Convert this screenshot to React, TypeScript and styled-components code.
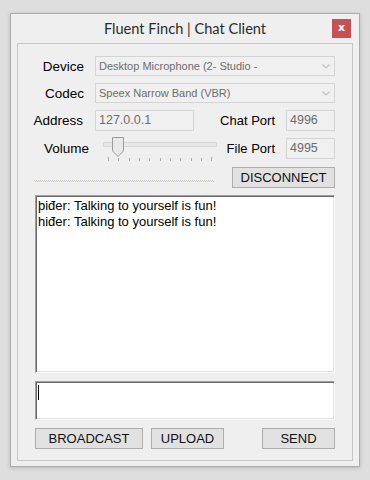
import React from 'react';
import styled, { createGlobalStyle } from 'styled-components';

const GlobalStyle = createGlobalStyle`
  html, body {
    margin: 0;
    padding: 0;
    background: #dedede;
  }
  body {
    font-family: "Liberation Sans", Arial, sans-serif;
    color: #000;
  }
`;

const Page = styled.div`
  padding: 13px 10px 0;
  height: 480px;
  box-sizing: border-box;
`;

const Window = styled.div`
  width: 350px;
  height: 454px;
  box-sizing: border-box;
  border: 1px solid #ababab;
  background: #efefef;
  box-shadow: 0 1px 4px rgba(0, 0, 0, 0.18);
  padding: 0 6px 5px;
  display: flex;
  flex-direction: column;
`;

const TitleBar = styled.div`
  height: 29px;
  flex: none;
  display: grid;
  grid-template-columns: 1fr auto 1fr;
  align-items: center;
`;

const Title = styled.div`
  grid-column: 2;
  font-family: Lato, "Noto Sans", sans-serif;
  font-size: 14.6px;
  color: #2b2b2b;
  white-space: nowrap;
`;

const CloseButton = styled.div`
  grid-column: 3;
  justify-self: end;
  align-self: start;
  margin-top: 5px;
  margin-right: 2px;
  width: 19px;
  height: 19px;
  background: #c75050;
  color: #fff;
  font-family: "DejaVu Sans", sans-serif;
  font-weight: bold;
  font-size: 11px;
  line-height: 17px;
  text-align: center;
`;

const Panel = styled.div`
  flex: 1;
  border: 1px solid #c6c6c6;
  padding: 12px 17px 11px 0;
  display: flex;
  flex-direction: column;
`;

const Row = styled.div<{ $h: number; $mt?: number }>`
  display: flex;
  align-items: center;
  height: ${(p) => p.$h}px;
  margin-top: ${(p) => p.$mt ?? 0}px;
  flex: none;
`;

const Label = styled.span<{ $w: number }>`
  flex: none;
  width: ${(p) => p.$w}px;
  text-align: right;
  font-size: 13.5px;
  white-space: nowrap;
`;

const PortLabel = styled.span`
  margin-left: auto;
  font-size: 13px;
  white-space: nowrap;
`;

const Select = styled.div`
  margin-left: 11px;
  width: 240px;
  height: 20px;
  box-sizing: border-box;
  border: 1px solid #d4d4d4;
  background: #f0f0f0;
  display: flex;
  align-items: center;
  padding: 0 4px 0 3px;
  font-size: 11px;
  color: #6d6d6d;
  white-space: nowrap;
`;

const SelectText = styled.span`
  flex: 1;
`;

const TextBox = styled.div<{ $w: number; $ml: number }>`
  margin-left: ${(p) => p.$ml}px;
  width: ${(p) => p.$w}px;
  height: 21px;
  box-sizing: border-box;
  border: 1px solid #d4d4d4;
  background: #f0f0f0;
  padding-left: 3px;
  font-size: 12.5px;
  line-height: 19px;
  color: #6d6d6d;
`;

const Slider = styled.svg`
  margin-left: 14px;
  flex: none;
  overflow: visible;
`;

const Dots = styled.div`
  margin-left: 16px;
  align-self: flex-end;
  margin-bottom: 6px;
  width: 180px;
  height: 2px;
  background:
    repeating-linear-gradient(90deg, #dcc8a4 0 1px, #f0f0f0 1px 2px, #b7c6dc 2px 3px, #f0f0f0 3px 4px) top / 100% 1px no-repeat,
    repeating-linear-gradient(90deg, #f0f0f0 0 1px, #c3cfdf 1px 2px, #f0f0f0 2px 3px, #d9c39c 3px 4px) bottom / 100% 1px no-repeat;
`;

const Button = styled.div<{ $w: number; $ml?: number }>`
  margin-left: ${(p) => p.$ml ?? 0}px;
  width: ${(p) => p.$w}px;
  height: 21px;
  box-sizing: border-box;
  border: 1px solid #adadad;
  background: #e1e1e1;
  font-size: 13px;
  line-height: 19px;
  text-align: center;
  color: #111;
  white-space: nowrap;
`;

const Sunken = styled.div<{ $h: number; $mt: number }>`
  margin-left: 17px;
  margin-top: ${(p) => p.$mt}px;
  width: 300px;
  height: ${(p) => p.$h}px;
  flex: none;
  box-sizing: border-box;
  background: #fff;
  border: 1px solid;
  border-color: #a0a0a0 #ffffff #ffffff #a0a0a0;
  box-shadow: inset 1px 1px 0 #696969, inset -1px -1px 0 #e3e3e3;
  padding: 2px 0 0 2px;
`;

const Message = styled.div`
  font-size: 13px;
  line-height: 16px;
  white-space: nowrap;
`;

const Caret = styled.div`
  margin-top: 1px;
  width: 1px;
  height: 15px;
  background: #000;
`;

const ButtonRow = styled.div`
  display: flex;
  margin-top: 8px;
  margin-left: 17px;
  height: 21px;
  flex: none;
`;

const Spacer = styled.div`
  flex: 1;
`;

function Chevron() {
  return (
    <svg width="8" height="5" viewBox="0 0 8 5">
      <polyline points="0.5,0.5 4,4 7.5,0.5" fill="none" stroke="#c2c2c2" strokeWidth="1.2" />
    </svg>
  );
}

const ticks = [5, 15, 26, 36, 46, 57, 67, 77, 88, 98, 108];

function VolumeSlider() {
  return (
    <Slider width="114" height="25" viewBox="0 0 114 25">
      <rect x="0.5" y="6.5" width="113" height="4" fill="#e7e9e9" stroke="#d5d5d5" />
      {ticks.map((x, i) => (
        <line
          key={x}
          x1={x + 0.5}
          x2={x + 0.5}
          y1={i === 0 || i === ticks.length - 1 ? 21 : 22}
          y2={25}
          stroke="#a8a8a8"
        />
      ))}
      <path d="M9.5 1.5 H20.5 V15 L15 20.5 L9.5 15 Z" fill="#e8e8e8" stroke="#9b9b9b" />
    </Slider>
  );
}

const App: React.FC = () => {
  return (
    <Page>
      <GlobalStyle />
      <Window>
        <TitleBar>
          <Title>Fluent Finch | Chat Client</Title>
          <CloseButton>x</CloseButton>
        </TitleBar>
        <Panel>
          <Row $h={20}>
            <Label $w={66}>Device</Label>
            <Select>
              <SelectText>Desktop Microphone (2- Studio -</SelectText>
              <Chevron />
            </Select>
          </Row>
          <Row $h={20} $mt={7}>
            <Label $w={66}>Codec</Label>
            <Select>
              <SelectText>Speex Narrow Band (VBR)</SelectText>
              <Chevron />
            </Select>
          </Row>
          <Row $h={21} $mt={7}>
            <Label $w={65}>Address</Label>
            <TextBox $w={99} $ml={12}>127.0.0.1</TextBox>
            <PortLabel>Chat Port</PortLabel>
            <TextBox $w={49} $ml={11}>4996</TextBox>
          </Row>
          <Row $h={21} $mt={7}>
            <Label $w={71}>Volume</Label>
            <VolumeSlider />
            <PortLabel>File Port</PortLabel>
            <TextBox $w={49} $ml={11}>4995</TextBox>
          </Row>
          <Row $h={21} $mt={8}>
            <Dots />
            <Spacer />
            <Button $w={103}>DISCONNECT</Button>
          </Row>
          <Sunken $h={178} $mt={7}>
            <Message>þiđer: Talking to yourself is fun!</Message>
            <Message>hiđer: Talking to yourself is fun!</Message>
          </Sunken>
          <Sunken $h={39} $mt={8}>
            <Caret />
          </Sunken>
          <ButtonRow>
            <Button $w={108}>BROADCAST</Button>
            <Button $w={73} $ml={8}>UPLOAD</Button>
            <Spacer />
            <Button $w={73}>SEND</Button>
          </ButtonRow>
        </Panel>
      </Window>
    </Page>
  );
};

export default App;
